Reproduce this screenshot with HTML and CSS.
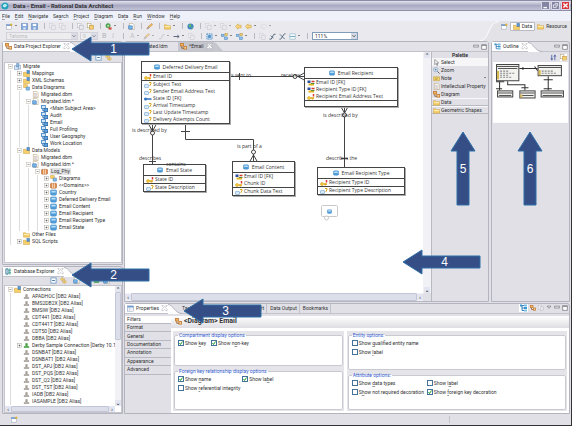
FILE: index.html
```html
<!DOCTYPE html>
<html lang="en">
<head>
    <meta charset="UTF-8">
    <meta name="viewport" content="width=device-width, initial-scale=1.0">
    <title>Data - Email - Rational Data Architect</title>
    <link rel="stylesheet" href="styles.css">
</head>
<body>
    <!-- Icon symbols -->
    <svg class="sprite" aria-hidden="true">
        <symbol id="folder" viewBox="0 0 16 16"><path d="M1 4h5l2 2h7v8H1z" fill="#f6cf6b" stroke="#c8942e"/><path d="M2 8h12" stroke="#fff2bd" stroke-width="2"/></symbol>
        <symbol id="folder-db" viewBox="0 0 16 16"><path d="M1 5h5l2 2h7v8H1z" fill="#f6cf6b" stroke="#c8942e"/><rect x="9" y="1" width="6" height="7" fill="#5b9bd5" stroke="#2c5f96"/></symbol>
        <symbol id="project" viewBox="0 0 16 16"><path d="M1 6h9v9H1z" fill="#d8e8f7" stroke="#4b78ab"/><path d="M6 1h5v8H6z" fill="#8fbbe4" stroke="#3c6ba0"/><path d="M11 5h4v9h-4z" fill="#f0f6fc" stroke="#4b78ab"/></symbol>
        <symbol id="doc" viewBox="0 0 16 16"><path d="M3 1h8l3 3v11H3z" fill="#fdfaf0" stroke="#a08a5c"/><path d="M5 6h6M5 9h6M5 12h6" stroke="#8a7c9c"/></symbol>
        <symbol id="model" viewBox="0 0 16 16"><path d="M3 1h8l3 3v11H3z" fill="#fff" stroke="#a08a5c"/><rect x="1" y="6" width="9" height="8" rx="1" fill="#77b2e8" stroke="#2c6bab"/></symbol>
        <symbol id="subject" viewBox="0 0 16 16"><rect x="1" y="1" width="9" height="7" fill="#d5e9fa" stroke="#4a8ac6" stroke-width="2"/><rect x="7" y="8" width="8" height="7" fill="#5ca0dd" stroke="#3672ad" stroke-width="2"/><path d="M4 9v4h3" fill="none" stroke="#3672ad" stroke-width="2"/></symbol>
        <symbol id="diagram" viewBox="0 0 16 16"><rect x="1" y="1" width="7" height="6" fill="#f4b45a" stroke="#c57f3a" stroke-width="2"/><rect x="9" y="8" width="6" height="6" fill="#f9d08c" stroke="#c57f3a" stroke-width="2"/><path d="M4 8v4h5" fill="none" stroke="#8d5a2a" stroke-width="2"/></symbol>
        <symbol id="diagrams" viewBox="0 0 16 16"><rect x="1" y="1" width="9" height="7" rx="1" fill="#f6cf6b" stroke="#c8942e"/><rect x="7" y="7" width="8" height="7" rx="1" fill="#86b9e6" stroke="#3c78b4"/></symbol>
        <symbol id="entity" viewBox="0 0 16 16"><rect x="1" y="2" width="14" height="12" rx="3" fill="#4f9ddb" stroke="#3f82bd"/><rect x="3" y="4" width="10" height="4" rx="1" fill="#b9def7"/></symbol>
        <symbol id="package" viewBox="0 0 16 16"><rect x="1" y="3" width="14" height="11" rx="2" fill="#dd8a4c" stroke="#a4501e"/><path d="M6 3v11M10 3v11" stroke="#fbe1c5" stroke-width="2"/></symbol>
        <symbol id="key" viewBox="0 0 16 12"><circle cx="4" cy="8" r="3" fill="#f6cf3c" stroke="#c99512"/><path d="M7 8h7M11 8v3" stroke="#e0a818" stroke-width="3"/><path d="M13 0v5" stroke="#dc3b34" stroke-width="3"/></symbol>
        <symbol id="attr" viewBox="0 0 16 12"><rect x="1" y="5" width="8" height="6" rx="1" fill="#d9ebfa" stroke="#5d93c5"/><path d="M10 1h4v3l-2 2v2" fill="none" stroke="#d8a820" stroke-width="2"/></symbol>
        <symbol id="fk" viewBox="0 0 16 12"><circle cx="3" cy="6" r="3" fill="#2d6fc0"/><path d="M5 6h10" stroke="#2d6fc0" stroke-width="3"/></symbol>
        <symbol id="pfk" viewBox="0 0 16 12"><rect x="1" y="1" width="6" height="5" fill="#2a4f9e"/><path d="M3 9h11" stroke="#e3b21c" stroke-width="4"/><path d="M9 3h6" stroke="#d2382f" stroke-width="3"/><path d="M8 7h7" stroke="#4d8f3a" stroke-width="2"/></symbol>
        <symbol id="conn" viewBox="0 0 16 16"><path d="M5 3h6v6h3v4H2V9h3z" fill="#b9b4ae"/><path d="M2 12h12M8 3v6" stroke="#837c76"/></symbol>
        <symbol id="conn-on" viewBox="0 0 16 16"><path d="M5 3h6v6h3v4H2V9h3z" fill="#63b85f"/><path d="M2 12h12M8 3v6" stroke="#32803a"/></symbol>
        <symbol id="db" viewBox="0 0 16 16"><path d="M2 2h5v12H2z" fill="#e4f1f8" stroke="#2f7594" stroke-width="2"/><path d="M11 1v14M8 5h6M8 11h6" stroke="#3b9a8b" stroke-width="2"/></symbol>
        <symbol id="save" viewBox="0 0 16 16"><path d="M1 1h14v14H1z" fill="#7da7dc" stroke="#4a74ad"/><path d="M4 2h8v5H4z" fill="#fff"/><path d="M5 10h6v5H5z" fill="#dce6f2"/></symbol>
        <symbol id="new" viewBox="0 0 16 16"><rect x="1" y="4" width="12" height="10" fill="#fff" stroke="#8a8fa8"/><path d="M1 5h12" stroke="#5a8fd0" stroke-width="3"/><path d="M12 1v6M9 4h6" stroke="#e9b61f" stroke-width="2"/></symbol>
        <symbol id="pages" viewBox="0 0 16 16"><rect x="1" y="1" width="8" height="10" fill="#f3f3f5" stroke="#b2b2ba"/><rect x="6" y="5" width="8" height="10" fill="#e9e9ee" stroke="#a5a5ae"/></symbol>
        <symbol id="pages-on" viewBox="0 0 16 16"><rect x="1" y="1" width="8" height="10" fill="#fff" stroke="#a08d55"/><rect x="6" y="5" width="9" height="9" fill="#f5cf70" stroke="#ad8129"/></symbol>
        <symbol id="run" viewBox="0 0 16 16"><circle cx="7" cy="6" r="5" fill="#50ac4d" stroke="#2f7f33"/><path d="M6 4l4 2-4 3z" fill="#fff"/><rect x="8" y="10" width="7" height="5" fill="#d34a3c"/></symbol>
        <symbol id="pen" viewBox="0 0 16 16"><path d="M2 14l3-6 8-7 2 3-8 7z" fill="#f3bf5a" stroke="#b7762c"/><path d="M2 14l3-6 3 3z" fill="#8a94b8"/></symbol>
        <symbol id="globe" viewBox="0 0 16 16"><circle cx="8" cy="8" r="7" fill="#3f86c9"/><path d="M4 4l5-1 1 4-4 3-2-2zM10 9l4 0-3 4z" fill="#6cbb61"/></symbol>
        <symbol id="back" viewBox="0 0 16 16"><path d="M1 8l6-6v3h7v6H7v3z" fill="#f8d77a" stroke="#c58f23"/></symbol>
        <symbol id="forward" viewBox="0 0 16 16"><path d="M15 8L9 2v3H2v6h7v3z" fill="#f1f1f3" stroke="#c2c2c8"/></symbol>
        <symbol id="link" viewBox="0 0 16 16"><path d="M1 5l4-4v3h5v3H5v2zM15 11l-4-4v3H6v3h5v2z" fill="#f8d77a" stroke="#c58f23"/></symbol>
        <symbol id="collapse" viewBox="0 0 16 16"><rect x="2" y="2" width="12" height="12" fill="#fff" stroke="#6f9cc6" stroke-width="2"/><path d="M5 8h6" stroke="#2f5f94" stroke-width="2"/></symbol>
        <symbol id="select-all" viewBox="0 0 16 16"><rect x="2" y="2" width="12" height="12" fill="#bfdcf2" stroke="#4a87bd" stroke-width="2" stroke-dasharray="3 2"/><rect x="5" y="5" width="6" height="6" fill="#4a87bd"/></symbol>
        <symbol id="arrange" viewBox="0 0 16 16"><rect x="1" y="3" width="6" height="5" fill="#8cbfe8" stroke="#3e7db4"/><rect x="9" y="1" width="6" height="5" fill="#f3d27a" stroke="#a9852c"/><rect x="8" y="9" width="7" height="6" fill="#8cbfe8" stroke="#3e7db4"/></symbol>
        <symbol id="route" viewBox="0 0 16 16"><path d="M1 14h4L11 3h4M4 6l6 6" fill="none" stroke="#4c6176" stroke-width="2"/></symbol>
        <symbol id="cross" viewBox="0 0 16 16"><path d="M1 14h3L12 2h3M2 3l11 11" fill="none" stroke="#4c6176" stroke-width="2"/></symbol>
        <symbol id="compart" viewBox="0 0 16 16"><rect x="2" y="2" width="12" height="12" fill="#eef7fb" stroke="#6fa3b8"/><path d="M2 8h12" stroke="#6fa3b8" stroke-width="2"/></symbol>
        <symbol id="line" viewBox="0 0 16 16"><path d="M2 13h5l4-9h4" fill="none" stroke="#b0b0b8" stroke-width="2"/></symbol>
        <symbol id="arrow-line" viewBox="0 0 16 16"><path d="M1 8h12M10 5l4 3-4 3" fill="none" stroke="#4b5870" stroke-width="2"/></symbol>
        <symbol id="cursor" viewBox="0 0 16 16"><path d="M4 1v12l3-3 2 5 2-1-2-5h4z" fill="#fff" stroke="#333"/></symbol>
        <symbol id="zoom-in" viewBox="0 0 16 16"><circle cx="6" cy="6" r="5" fill="#d4e8f7" stroke="#6c8fb0"/><path d="M10 10l5 5" stroke="#555" stroke-width="2"/><path d="M4 6h4M6 4v4" stroke="#345"/></symbol>
        <symbol id="note" viewBox="0 0 16 16"><path d="M1 4h14v9H1z" fill="#f5d772" stroke="#b58f2a"/><path d="M4 7h8M4 10h6" stroke="#8c6a1a"/></symbol>
        <symbol id="outline" viewBox="0 0 16 16"><path d="M5 3v10M5 3h4M5 8h4M5 13h4" stroke="#3b7fb8" stroke-width="2"/><rect x="1" y="1" width="4" height="4" fill="#3b97d0"/><rect x="9" y="1" width="6" height="4" fill="#7fc0e6"/><rect x="9" y="6" width="6" height="4" fill="#3b97d0"/><rect x="9" y="11" width="6" height="4" fill="#7fc0e6"/></symbol>
        <symbol id="sort" viewBox="0 0 16 16"><path d="M4 2v11M2 10l2 4 2-4M11 14V3M9 6l2-4 2 4" fill="none" stroke="#4b5fa8" stroke-width="2"/></symbol>
        <symbol id="table" viewBox="0 0 16 16"><rect x="1" y="2" width="14" height="12" fill="#fff" stroke="#6b83a8"/><path d="M1 4h14" stroke="#5a8fd0" stroke-width="3"/><path d="M1 9h14M6 5v9" stroke="#a9b9d0"/></symbol>
        <symbol id="close" viewBox="0 0 16 16"><path d="M2 2l4 4-4 4v3h3l3-3 3 3h3v-3l-4-4 4-4V1h-3L8 4 5 1H2z" fill="#fff" stroke="#9a9aa4"/></symbol>
        <symbol id="minus" viewBox="0 0 10 10"><rect x="1" y="1" width="8" height="8" fill="#fff" stroke="#b9b3a8"/><path d="M3 5h4" stroke="#444"/></symbol>
        <symbol id="plus" viewBox="0 0 10 10"><rect x="1" y="1" width="8" height="8" fill="#fff" stroke="#a9a49c"/><path d="M3 5h4M5 3v4" stroke="#333"/></symbol>
        <symbol id="slope" viewBox="0 0 16 10" preserveAspectRatio="none"><path d="M0 0c6 0 8 10 16 10H0z" fill="#fff"/><path d="M0 .5c6 0 8 9 16 9" fill="none" stroke="#b1b1bd"/></symbol>
        <symbol id="min" viewBox="0 0 16 16"><rect x="2" y="3" width="12" height="5" fill="#fff" stroke="#77777f" stroke-width="2"/></symbol>
        <symbol id="max" viewBox="0 0 16 16"><rect x="2" y="2" width="12" height="12" fill="#fff" stroke="#77777f" stroke-width="2"/><path d="M2 4h12" stroke="#77777f" stroke-width="2"/></symbol>
        <symbol id="menu" viewBox="0 0 16 16"><path d="M3 3h10l-5 6z" fill="#fff" stroke="#77777f" stroke-width="2"/></symbol>
        <symbol id="arrow-left" viewBox="0 0 79 26"><path d="M1 13L20 1v6h58v12H20v6z" fill="#354f86" stroke="#2f6ea6"/></symbol>
        <symbol id="arrow-up" viewBox="0 0 26 75"><path d="M13 1L1 20h6v54h12V20h6z" fill="#354f86" stroke="#2f6ea6"/></symbol>
    </svg>

    <header class="titlebar">
        <svg class="logo" viewBox="0 0 16 16"><circle cx="8" cy="8" r="7" fill="#25a3bd"/><path d="M4 9a4 4 0 0 1 8-2l-4 4z" fill="#c4f0f5"/></svg>
        <h1>Data - Email - Rational Data Architect</h1>
        <button class="win" aria-label="Minimize"><svg viewBox="0 0 10 10"><path d="M2 8h5" stroke="#fff" stroke-width="2"/></svg></button>
        <button class="win" aria-label="Restore"><svg viewBox="0 0 10 10"><path d="M4 2h4v4M2 4h4v4H2z" fill="none" stroke="#fff"/></svg></button>
        <button class="win win-close" aria-label="Close"><svg viewBox="0 0 10 10"><path d="M2 2l6 6M8 2l-6 6" stroke="#fff" stroke-width="2"/></svg></button>
    </header>

    <nav class="menubar">
        <button><u>F</u>ile</button>
        <button><u>E</u>dit</button>
        <button><u>N</u>avigate</button>
        <button>Se<u>a</u>rch</button>
        <button><u>P</u>roject</button>
        <button><u>D</u>iagram</button>
        <button>Da<u>t</u>a</button>
        <button><u>R</u>un</button>
        <button><u>W</u>indow</button>
        <button><u>H</u>elp</button>
    </nav>

    <div class="toolbars">
        <div class="tools">
            <div class="toolbar">
                <button class="drop" aria-label="New"><svg><use href="#new"/></svg></button>
                <button aria-label="Save"><svg><use href="#save"/></svg></button>
                <button aria-label="Save all"><svg><use href="#save"/></svg></button>
                <i></i>
                <button aria-label="Cut" disabled><svg><use href="#pages"/></svg></button>
                <button aria-label="Print" disabled><svg><use href="#pages"/></svg></button>
                <i></i>
                <button aria-label="Copy"><svg><use href="#pages"/></svg></button>
                <button aria-label="Paste"><svg><use href="#pages-on"/></svg></button>
                <i></i>
                <button class="drop" aria-label="Run"><svg><use href="#run"/></svg></button>
                <i></i>
                <button aria-label="Script"><svg><use href="#model"/></svg></button>
                <i></i>
                <button aria-label="Annotate"><svg><use href="#pen"/></svg></button>
                <i></i>
                <button class="drop" aria-label="Open"><svg><use href="#folder"/></svg></button>
                <i></i>
                <button aria-label="Browser"><svg><use href="#globe"/></svg></button>
                <i></i>
                <button class="drop" aria-label="Next" disabled><svg><use href="#pages"/></svg></button>
                <button class="drop" aria-label="Previous" disabled><svg><use href="#pages"/></svg></button>
                <button aria-label="Last edit"><svg><use href="#back"/></svg></button>
                <button class="drop" aria-label="Back"><svg><use href="#back"/></svg></button>
                <button class="drop" aria-label="Forward" disabled><svg><use href="#forward"/></svg></button>
            </div>
            <div class="toolbar">
                <select class="combo font-name" aria-label="Font" disabled><option>Tahoma</option></select>
                <select class="combo font-size" aria-label="Size" disabled><option>9</option></select>
                <button class="letter" disabled><b>B</b></button>
                <button class="letter" disabled><em>I</em></button>
                <i></i>
                <button class="drop letter" disabled>A</button>
                <button class="drop" aria-label="Fill" disabled><svg><use href="#pen"/></svg></button>
                <button class="drop" aria-label="Line" disabled><svg><use href="#line"/></svg></button>
                <button class="drop" aria-label="Arrow"><svg><use href="#arrow-line"/></svg></button>
                <button aria-label="Copy format" disabled><svg><use href="#pages"/></svg></button>
                <i></i>
                <button class="drop" aria-label="Select all"><svg><use href="#select-all"/></svg></button>
                <button class="drop" aria-label="Arrange"><svg><use href="#arrange"/></svg></button>
                <button class="drop" aria-label="Align"><svg><use href="#arrange"/></svg></button>
                <i></i>
                <button aria-label="Auto size" disabled><svg><use href="#pages"/></svg></button>
                <button aria-label="Route"><svg><use href="#route"/></svg></button>
                <button aria-label="Cross"><svg><use href="#cross"/></svg></button>
                <button class="drop" aria-label="Compartments"><svg><use href="#compart"/></svg></button>
                <i></i>
                <select class="combo zoom" aria-label="Zoom"><option>111%</option></select>
            </div>
        </div>
        <div class="perspectives">
            <svg class="perspective-curve" viewBox="0 0 20 20" preserveAspectRatio="none"><path d="M0 20C10 20 8 0 20 0v20z" fill="#e2e2e7"/><path d="M0 20C10 20 8 .5 20 .5" fill="none" stroke="#fff"/></svg>
            <button aria-label="Open perspective"><svg><use href="#new"/></svg></button>
            <button class="on"><svg><use href="#folder-db"/></svg>Data</button>
            <button><svg><use href="#folder"/></svg>Resource</button>
        </div>
    </div>

    <main class="workbench">
        <div class="side">
            <section class="view explorer">
                <div class="tabs">
                    <div class="tab"><svg><use href="#diagram"/></svg>Data Project Explorer<svg><use href="#close"/></svg></div><svg class="slope"><use href="#slope"/></svg>
                </div>
                <div class="view-tools">
                    <button aria-label="Collapse all"><svg><use href="#collapse"/></svg></button>
                    <button aria-label="Link with editor"><svg><use href="#link"/></svg></button>
                </div>
                <div class="pane">
                    <ul class="tree">
                        <li><div><svg class="ex"><use href="#minus"/></svg><svg><use href="#project"/></svg>Migrate</div>
                            <ul>
                                <li><div><svg class="ex"><use href="#plus"/></svg><svg><use href="#folder-db"/></svg>Mappings</div></li>
                                <li><div><svg class="ex"><use href="#plus"/></svg><svg><use href="#folder-db"/></svg>XML Schemas</div></li>
                                <li><div><svg class="ex"><use href="#minus"/></svg><svg><use href="#diagrams"/></svg>Data Diagrams</div>
                                    <ul>
                                        <li><div><s></s><svg><use href="#doc"/></svg>Migrated.dbm</div></li>
                                        <li><div><svg class="ex"><use href="#minus"/></svg><svg><use href="#model"/></svg>Migrated.ldm *</div>
                                            <ul>
                                                <li><div><s></s><svg><use href="#subject"/></svg>&lt;Main Subject Area&gt;</div></li>
                                                <li><div><s></s><svg><use href="#subject"/></svg>Audit</div></li>
                                                <li><div><s></s><svg><use href="#subject"/></svg>Email</div></li>
                                                <li><div><s></s><svg><use href="#subject"/></svg>Full Profiling</div></li>
                                                <li><div><s></s><svg><use href="#subject"/></svg>User Geography</div></li>
                                                <li><div><s></s><svg><use href="#subject"/></svg>Work Location</div></li>
                                            </ul>
                                        </li>
                                    </ul>
                                </li>
                                <li><div><svg class="ex"><use href="#minus"/></svg><svg><use href="#folder-db"/></svg>Data Models</div>
                                    <ul>
                                        <li><div><s></s><svg><use href="#doc"/></svg>Migrated.dbm</div></li>
                                        <li><div><svg class="ex"><use href="#minus"/></svg><svg><use href="#model"/></svg>Migrated.ldm *</div>
                                            <ul>
                                                <li><div><svg class="ex"><use href="#minus"/></svg><svg><use href="#package"/></svg><span class="picked">Log_Phy</span></div>
                                                    <ul>
                                                        <li><div><svg class="ex"><use href="#plus"/></svg><svg><use href="#diagrams"/></svg>Diagrams</div></li>
                                                        <li><div><svg class="ex"><use href="#plus"/></svg><svg><use href="#package"/></svg>&lt;&lt;Domains&gt;&gt;</div></li>
                                                        <li><div><svg class="ex"><use href="#plus"/></svg><svg><use href="#entity"/></svg>Country</div></li>
                                                        <li><div><svg class="ex"><use href="#plus"/></svg><svg><use href="#entity"/></svg>Deferred Delivery Email</div></li>
                                                        <li><div><svg class="ex"><use href="#plus"/></svg><svg><use href="#entity"/></svg>Email Content</div></li>
                                                        <li><div><svg class="ex"><use href="#plus"/></svg><svg><use href="#entity"/></svg>Email Recipient</div></li>
                                                        <li><div><svg class="ex"><use href="#plus"/></svg><svg><use href="#entity"/></svg>Email Recipient Type</div></li>
                                                        <li><div><svg class="ex"><use href="#plus"/></svg><svg><use href="#entity"/></svg>Email State</div></li>
                                                    </ul>
                                                </li>
                                            </ul>
                                        </li>
                                    </ul>
                                </li>
                                <li><div><s></s><svg><use href="#folder"/></svg>Other Files</div></li>
                                <li><div><svg class="ex"><use href="#plus"/></svg><svg><use href="#folder-db"/></svg>SQL Scripts</div></li>
                            </ul>
                        </li>
                    </ul>
                </div>
            </section>

            <section class="view database">
                <div class="tabs">
                    <div class="tab"><svg><use href="#db"/></svg>Database Explorer<svg><use href="#close"/></svg></div><svg class="slope"><use href="#slope"/></svg>
                </div>
                <div class="view-tools">
                    <button aria-label="Collapse all"><svg><use href="#collapse"/></svg></button>
                    <button aria-label="Link with editor"><svg><use href="#link"/></svg></button>
                    <i></i>
                    <button aria-label="New connection"><svg><use href="#model"/></svg></button>
                    <button aria-label="Filter"><svg><use href="#conn"/></svg></button>
                    <button aria-label="Reconnect"><svg><use href="#conn-on"/></svg></button>
                    <button aria-label="Save script"><svg><use href="#model"/></svg></button>
                    <button aria-label="View menu"><svg><use href="#menu"/></svg></button>
                </div>
                <div class="pane scrolled">
                    <ul class="tree">
                        <li><div><svg class="ex"><use href="#minus"/></svg><svg><use href="#folder-db"/></svg>Connections</div>
                            <ul>
                                <li><div><s></s><svg><use href="#conn"/></svg>APADHOC [DB2 Alias]</div></li>
                                <li><div><s></s><svg><use href="#conn"/></svg>BMS2DB2X [DB2 Alias]</div></li>
                                <li><div><s></s><svg><use href="#conn"/></svg>BMSIW [DB2 Alias]</div></li>
                                <li><div><s></s><svg><use href="#conn"/></svg>CDT441 [DB2 Alias]</div></li>
                                <li><div><s></s><svg><use href="#conn"/></svg>CDT441T [DB2 Alias]</div></li>
                                <li><div><s></s><svg><use href="#conn"/></svg>CDT50 [DB2 Alias]</div></li>
                                <li><div><s></s><svg><use href="#conn"/></svg>DBBA [DB2 Alias]</div></li>
                                <li><div><svg class="ex"><use href="#plus"/></svg><svg><use href="#conn-on"/></svg>Derby Sample Connection [Derby 10.1</div></li>
                                <li><div><s></s><svg><use href="#conn"/></svg>DSNBAT [DB2 Alias]</div></li>
                                <li><div><s></s><svg><use href="#conn"/></svg>DSNBAT1 [DB2 Alias]</div></li>
                                <li><div><s></s><svg><use href="#conn"/></svg>DST_APJ [DB2 Alias]</div></li>
                                <li><div><s></s><svg><use href="#conn"/></svg>DST_PQS [DB2 Alias]</div></li>
                                <li><div><s></s><svg><use href="#conn"/></svg>DST_Q2 [DB2 Alias]</div></li>
                                <li><div><s></s><svg><use href="#conn"/></svg>DST_TST [DB2 Alias]</div></li>
                                <li><div><s></s><svg><use href="#conn"/></svg>IADB [DB2 Alias]</div></li>
                                <li><div><s></s><svg><use href="#conn"/></svg>IASAMPLE [DB2 Alias]</div></li>
                            </ul>
                        </li>
                    </ul>
                    <div class="vbar"><b>⌃</b><span class="thumb"></span><b>⌄</b></div>
                    <div class="hbar"><b>‹</b><span class="thumb"></span><b>›</b></div>
                </div>
            </section>
        </div>

        <div class="center">
            <div class="upper">
                <section class="view editor">
                    <div class="tabs editor-tabs">
                        <div class="tab off"><svg><use href="#model"/></svg>*Migrated.ldm</div>
                        <div class="tab current"><svg><use href="#diagram"/></svg>*Email<svg><use href="#close"/></svg></div><svg class="slope" viewBox="0 0 16 10" preserveAspectRatio="none"><path d="M0 0c6 0 8 10 16 10H0z" fill="#c6c6ce"/></svg>
                        <div class="tab-tools"><svg><use href="#min"/></svg><svg><use href="#max"/></svg></div>
                    </div>
                    <div class="editor-body">
                        <div class="drawing">
                            <div class="canvas">
                                <svg class="lines" width="300" height="240" fill="none" stroke="#444">
                                    <!-- Deferred Delivery Email to Email Recipient -->
                                    <path d="M105 24.5h75M114.5 21v7M180 20.5l-7 4 7 4"/>
                                    <circle cx="170" cy="24.5" r="2" fill="#fff"/>
                                    <!-- Deferred Delivery Email to Email State -->
                                    <path d="M27.5 72v40M23.5 72l4 7 4-7M24 109.5h7"/>
                                    <circle cx="27.5" cy="81" r="2" fill="#fff"/>
                                    <!-- Deferred Delivery Email to Email Content -->
                                    <path d="M60.5 72v15.5h68V110M56 79.5h9M124.5 110l4-7 4 7"/>
                                    <circle cx="128.5" cy="100" r="2" fill="#fff"/>
                                    <!-- Email Recipient to Email Recipient Type -->
                                    <path d="M219.5 54v62M215.5 54l4 7 4-7M216 106.5h7"/>
                                    <circle cx="219.5" cy="63" r="2" fill="#fff"/>
                                </svg>
                                <span class="label sent">is sent to</span>
                                <span class="label receives">receives</span>
                                <span class="label described">is described by</span>
                                <span class="label describes">describes</span>
                                <span class="label part">is part of a</span>
                                <span class="label described-by">is described by</span>
                                <span class="label describes-the">describes the</span>

                                <div class="node delivery">
                                    <h2><svg><use href="#entity"/></svg>Deferred Delivery Email</h2>
                                    <ul><li><svg><use href="#key"/></svg>Email ID</li></ul>
                                    <ul>
                                        <li><svg><use href="#attr"/></svg>Subject Text</li>
                                        <li><svg><use href="#attr"/></svg>Sender Email Address Text</li>
                                        <li><svg><use href="#fk"/></svg>State ID [FK]</li>
                                        <li><svg><use href="#attr"/></svg>Arrival Timestamp</li>
                                        <li><svg><use href="#attr"/></svg>Last Update Timestamp</li>
                                        <li><svg><use href="#attr"/></svg>Delivery Attempts Count</li>
                                    </ul>
                                </div>
                                <div class="node recipient">
                                    <h2><svg><use href="#entity"/></svg>Email Recipient</h2>
                                    <ul>
                                        <li><svg><use href="#pfk"/></svg>Email ID [FK]</li>
                                        <li><svg><use href="#pfk"/></svg>Recipient Type ID [FK]</li>
                                        <li><svg><use href="#key"/></svg>Recipient Email Address Text</li>
                                    </ul>
                                    <ul class="empty"></ul>
                                </div>
                                <div class="node state">
                                    <h2><svg><use href="#entity"/></svg>Email State</h2>
                                    <ul><li><svg><use href="#key"/></svg>State ID</li></ul>
                                    <ul><li><svg><use href="#attr"/></svg>State Description</li></ul>
                                </div>
                                <div class="node content">
                                    <h2><svg><use href="#entity"/></svg>Email Content</h2>
                                    <ul>
                                        <li><svg><use href="#pfk"/></svg>Email ID [FK]</li>
                                        <li><svg><use href="#key"/></svg>Chunk ID</li>
                                    </ul>
                                    <ul><li><svg><use href="#attr"/></svg>Chunk Data Text</li></ul>
                                </div>
                                <div class="node type">
                                    <h2><svg><use href="#entity"/></svg>Email Recipient Type</h2>
                                    <ul><li><svg><use href="#key"/></svg>Recipient Type ID</li></ul>
                                    <ul><li><svg><use href="#attr"/></svg>Recipient Type Description</li></ul>
                                </div>
                                <span class="label contains">contains</span>
                                <svg class="balloon" viewBox="0 0 18 16"><rect x=".5" y=".5" width="16" height="11" rx="1" fill="#fff" stroke="#c9c9c9"/><circle cx="5.500" cy="13" r="2" fill="#fff" stroke="#c9c9c9"/><use href="#entity" x="6" y="4" width="5" height="5"/></svg>
                            </div>
                            <div class="vbar"><b>⌃</b><span></span><b>⌄</b></div>
                            <div class="hbar"><b>‹</b><span class="thumb"></span><b>›</b></div>
                        </div>
                        <aside class="palette">
                            <h2>Palette</h2>
                            <button class="picked"><svg><use href="#cursor"/></svg>Select</button>
                            <button><svg><use href="#zoom-in"/></svg>Zoom</button>
                            <button class="more"><svg><use href="#note"/></svg>Note</button>
                            <button><svg><use href="#doc"/></svg>Intellectual Property</button>
                            <button><svg><use href="#diagram"/></svg>Diagram</button>
                            <button class="drawer"><svg><use href="#folder"/></svg>Data</button>
                            <button class="drawer"><svg><use href="#folder"/></svg>Geometric Shapes</button>
                        </aside>
                    </div>
                </section>

                <section class="view outline">
                    <div class="tabs">
                        <div class="tab"><svg><use href="#outline"/></svg>Outline<svg><use href="#close"/></svg></div><svg class="slope"><use href="#slope"/></svg>
                        <div class="tab-tools"><svg><use href="#min"/></svg><svg><use href="#max"/></svg></div>
                    </div>
                    <div class="view-tools">
                        <button aria-label="Sort"><svg><use href="#sort"/></svg></button>
                        <button class="on" aria-label="Overview"><svg><use href="#pages-on"/></svg></button>
                    </div>
                    <svg class="overview" viewBox="0 0 74 60">
                        <rect width="74" height="60" fill="#fff"/>
                        <g fill="#f3f3f0" stroke="#444">
                            <rect x="3.500" y="2.500" width="22" height="16"/>
                            <rect x="44.500" y="3.500" width="23" height="10"/>
                            <rect x="4.500" y="28.500" width="15" height="6"/>
                            <rect x="26.500" y="28.500" width="15" height="7"/>
                            <rect x="47.500" y="28.500" width="22" height="6"/>
                        </g>
                        <path d="M4 4.500h21M5 6.500h19M45 5.500h22M5 30.500h14M27 30.500h14M48 30.500h21M6 33h12M28 33h12M49 33h19" stroke="#555"/>
                        <path d="M7 9h9M7 11h15M7 13h9M7 15h12M48 9h11M48 11h15" stroke="#888" stroke-dasharray="2 1"/>
                        <path d="M5 9v8M46 8v5M28 32v3" stroke="#d9b84d" stroke-width="2"/>
                        <path d="M26 6.500h18M29.500 5v3M41 4.500l3 4M6.500 19v9M3 19.500h8M3 26.500h6M14.500 19v3.500h17V28M28 25.500h7M54.500 14v14M50 17.500h9M50 26.500h8" fill="none" stroke="#333"/>
                    </svg>
                </section>
            </div>

            <section class="view properties">
                <div class="tabs">
                    <div class="tab"><svg><use href="#table"/></svg>Properties<svg><use href="#close"/></svg></div><svg class="slope"><use href="#slope"/></svg>
                    <div class="other-tabs">
                        <button>Tasks</button>
                        <button class="report">Model Report</button>
                        <button>Data Output</button>
                        <button>Bookmarks</button>
                    </div>
                    <div class="tab-tools"><svg class="on"><use href="#outline"/></svg><svg><use href="#diagram"/></svg><svg><use href="#pages"/></svg><svg><use href="#menu"/></svg><svg><use href="#min"/></svg><svg><use href="#max"/></svg></div>
                </div>
                <div class="property-body">
                    <nav class="pages">
                        <button class="on">Filters</button>
                        <button>Format</button>
                        <button>General</button>
                        <button>Documentation</button>
                        <button>Annotation</button>
                        <button>Appearance</button>
                        <button>Advanced</button>
                    </nav>
                    <div class="sheet">
                        <h2><svg><use href="#diagram"/></svg>&lt;Diagram&gt; Email</h2>
                        <form class="options">
                            <div class="column">
                                <fieldset>
                                    <legend>Compartment display options</legend>
                                    <div class="checks inline">
                                        <label><input type="checkbox" checked><span>Show <u>k</u>ey</span></label>
                                        <label><input type="checkbox" checked><span>Show n<u>o</u>n-key</span></label>
                                    </div>
                                </fieldset>
                                <fieldset class="tall">
                                    <legend>Foreign key relationship display options</legend>
                                    <div class="checks">
                                        <label><input type="checkbox" checked><span>Show <u>n</u>ame</span></label>
                                        <label><input type="checkbox" checked><span>Show la<u>b</u>el</span></label>
                                        <label><input type="checkbox"><span>Show <u>r</u>eferential integrity</span></label>
                                    </div>
                                </fieldset>
                            </div>
                            <div class="column wide">
                                <fieldset>
                                    <legend>Entity options:</legend>
                                    <div class="checks stacked">
                                        <label><input type="checkbox"><span>Show <u>q</u>ualified entity name</span></label>
                                        <label><input type="checkbox"><span>Show <u>l</u>abel</span></label>
                                    </div>
                                </fieldset>
                                <fieldset>
                                    <legend>Attribute options:</legend>
                                    <div class="checks">
                                        <label><input type="checkbox"><span>Show <u>d</u>ata types</span></label>
                                        <label><input type="checkbox"><span>Show l<u>a</u>bel</span></label>
                                        <label><input type="checkbox"><span>S<u>h</u>ow not required decoration</span></label>
                                        <label><input type="checkbox" checked><span>Show <u>f</u>oreign key decoration</span></label>
                                    </div>
                                </fieldset>
                            </div>
                        </form>
                    </div>
                </div>
            </section>
        </div>
    </main>

    <footer class="statusbar"><svg><use href="#new"/></svg><i></i></footer>

    <!-- Numbered callouts -->
    <div class="callout left c1"><svg><use href="#arrow-left"/></svg><span>1</span></div>
    <div class="callout left c2"><svg><use href="#arrow-left"/></svg><span>2</span></div>
    <div class="callout left c3"><svg><use href="#arrow-left"/></svg><span>3</span></div>
    <div class="callout left c4"><svg><use href="#arrow-left"/></svg><span>4</span></div>
    <div class="callout up c5"><svg><use href="#arrow-up"/></svg><span>5</span></div>
    <div class="callout up c6"><svg><use href="#arrow-up"/></svg><span>6</span></div>
</body>
</html>
```

FILE: styles.css
```css
* {
    box-sizing: border-box;
}

body {
    position: relative;
    display: flex;
    flex-direction: column;
    height: 100vh;
    margin: 0;
    overflow: hidden;
    border-right: 1px solid #333;
    border-bottom: 1px solid #333;
    background: #e0e0e6;
    color: #333;
    font: 5px/7px Roboto, "Liberation Sans", sans-serif;
    white-space: nowrap;
}

h1, h2, ul, fieldset, legend {
    margin: 0;
    padding: 0;
    font-size: inherit;
    list-style: none;
}

button, select, input {
    margin: 0;
    padding: 0;
    border: 0;
    background: none;
    color: inherit;
    font: inherit;
}

svg {
    flex: none;
    width: 7px;
    height: 7px;
}

.sprite {
    position: absolute;
    width: 0;
    height: 0;
}

/* Title and menu */
.titlebar {
    display: flex;
    align-items: center;
    gap: 1px;
    height: 11px;
    padding: 0 1px;
    border-top: 1px solid #8c8ca6;
    border-bottom: 1px solid #8f8fa8;
    background: linear-gradient(#e3e3ee, #a9a9c3 50%, #c3c3d6);
}

.titlebar h1 {
    flex: 1;
    padding-left: 3px;
    font-size: 6px;
}

.logo {
    width: 8px;
    height: 8px;
}

.win {
    display: flex;
    width: 9px;
    height: 9px;
    border: 1px solid #dcdcea;
    border-radius: 1px;
    background: #8484a3;
}

.win-close {
    background: #d8383c;
}

.menubar {
    display: flex;
    gap: 5px;
    height: 10px;
    padding: 0 2px;
    background: #eef1f9;
}

u {
    text-decoration-color: #999;
    text-decoration-thickness: 1px;
}

/* Toolbars */
.toolbars {
    display: flex;
    justify-content: space-between;
    height: 20px;
    background: #e9e9ee;
}

.tools {
    padding-left: 6px;
}

.toolbar {
    display: flex;
    align-items: center;
    gap: 2px;
    height: 10px;
}

.toolbar button {
    display: flex;
    align-items: center;
    width: 8px;
}

.toolbar button:disabled {
    color: #aaa;
    opacity: 0.6;
}

.toolbar .drop {
    width: 13px;
}

.drop::after {
    margin-left: 2px;
    border: 1px solid transparent;
    border-top-color: #222;
    content: "";
}

.toolbar i {
    width: 6px;
    height: 6px;
    background: linear-gradient(#b9b9c2, #b9b9c2) center / 1px 100% no-repeat;
}

.letter {
    padding-left: 2px;
    font-size: 7px;
}

.combo {
    width: 18px;
    height: 8px;
    padding-left: 2px;
    border: 1px solid #c9c9d0;
    border-radius: 0;
    background: url("data:image/svg+xml,%3Csvg xmlns='http://www.w3.org/2000/svg' viewBox='0 0 8 8'%3E%3Cpath d='M0 0h8v8H0z' fill='%23d4d9e6'/%3E%3Cpath d='M2 3l2 2 2-2' fill='none' stroke='%23333'/%3E%3C/svg%3E") right / 6px 6px no-repeat #fff;
    line-height: 6px;
    appearance: none;
}

.combo:disabled {
    background-color: #efeff2;
    color: #aaa;
    opacity: 0.7;
}

.font-name {
    width: 72px;
}

.zoom {
    width: 46px;
    border-color: #7f9db9;
}

.perspectives {
    display: flex;
    align-items: center;
    height: 20px;
    padding: 0 2px 9px 0;
    background: #e2e2e7;
}

.perspectives button {
    display: flex;
    align-items: center;
    gap: 2px;
    height: 9px;
    padding: 0 2px;
}

.perspectives .on {
    border: 1px solid #b9b9c4;
    border-radius: 1px;
    background: #fff;
}

.perspectives .perspective-curve {
    align-self: flex-start;
    width: 19px;
    height: 20px;
    background: #e9e9ee;
}

/* Workbench */
.workbench {
    display: flex;
    flex: 1;
    gap: 1px;
    min-height: 0;
    padding: 0 1px 0 2px;
}

.side, .center {
    display: flex;
    flex-direction: column;
    gap: 1px;
    min-width: 0;
}

.side {
    flex: 0 0 121px;
}

.center {
    flex: 1;
}

.view {
    display: flex;
    flex-direction: column;
    min-height: 0;
    min-width: 0;
    border: 1px solid #b4b4bf;
    border-radius: 3px 3px 0 0;
}

.explorer {
    flex: 225;
}

.database {
    flex: 148;
}

.tabs {
    display: flex;
    flex: none;
    height: 10px;
    border-bottom: 1px solid #c2c2cb;
}

.tab {
    display: flex;
    align-items: center;
    gap: 2px;
    padding-left: 2px;
    background: #fff;
}

.slope {
    width: 14px;
    height: 10px;
}

.tab-tools {
    display: flex;
    align-items: center;
    gap: 2px;
    margin-left: auto;
    padding-right: 1px;
}

.tab-tools svg {
    width: 6px;
    height: 6px;
}

.tab-tools .on {
    width: 9px;
    height: 8px;
    background: #fff;
}

.view-tools {
    display: flex;
    flex: none;
    align-items: center;
    justify-content: flex-end;
    gap: 3px;
    height: 10px;
    padding-right: 2px;
}

.view-tools button {
    display: flex;
}

.view-tools .on {
    background: #fff;
}

.explorer .view-tools {
    padding-right: 10px;
}

.database .view-tools {
    height: 8px;
}

.pane {
    flex: 1;
    min-height: 0;
    margin: 0 0 1px 1px;
    overflow: hidden;
    border: 1px solid #c5c5ce;
    background: #fff;
}

.scrolled {
    display: grid;
    grid-template: minmax(0, 1fr) 6px / minmax(0, 1fr) 6px;
    margin-bottom: 0;
}

/* Trees */
.tree {
    overflow: hidden;
    padding: 0 0 0 3px;
}

.tree ul {
    padding-left: 9px;
    background: linear-gradient(#dcdcdc, #dcdcdc) 2px 0 / 1px 100% no-repeat;
}

.tree div {
    display: flex;
    align-items: center;
    gap: 1px;
    height: 7px;
}

.tree div svg:last-of-type {
    margin-right: 1px;
}

.tree .ex, .tree s {
    flex: none;
    width: 5px;
    height: 5px;
}

.tree .picked {
    padding: 0 1px;
    background: #e3e3e6;
}

/* Scroll bars */
.vbar, .hbar {
    display: flex;
    background: #f2f2f6;
    color: #333;
    line-height: 6px;
    text-align: center;
}

.vbar {
    flex-direction: column;
}

.hbar {
    grid-column: 1;
}

.vbar b, .hbar b {
    flex: none;
    width: 6px;
    height: 6px;
    background: #e3e6f0;
}

.vbar span, .hbar span {
    flex: 1;
}

.vbar .thumb {
    flex: 0 0 40%;
    margin-bottom: auto;
}

.thumb {
    align-self: stretch;
    border: 1px solid #c3c6d6;
    border-radius: 1px;
    background: #dcdfea;
}

/* Editor */
.upper {
    display: flex;
    flex: 262;
    gap: 2px;
    min-height: 0;
}

.editor {
    flex: 1;
}

.editor-tabs {
    background: #e2e2e8;
}

.editor-tabs .off {
    width: 53px;
    background: none;
}

.editor-tabs .current {
    background: #c6c6ce;
}

.editor-body {
    display: flex;
    flex: 1;
    min-height: 0;
}

.drawing {
    display: grid;
    flex: 1;
    grid-template: minmax(0, 1fr) 8px / minmax(0, 1fr) 8px;
}

.drawing .vbar, .drawing .hbar {
    align-items: center;
}

.canvas {
    position: relative;
    overflow: hidden;
    background: #fff;
    font-family: "Open Sans", "Noto Sans", sans-serif;
}

.lines, .label, .node, .balloon {
    position: absolute;
}

.lines {
    top: 0;
    left: 0;
    width: 300px;
    height: 240px;
}

.node {
    border: 1px solid #444;
    background: #fff;
    box-shadow: 1px 1px #aaa;
}

.node h2 {
    display: flex;
    align-items: center;
    justify-content: center;
    gap: 3px;
    height: 10px;
    font-weight: normal;
}

.node h2 svg {
    width: 6px;
    height: 6px;
}

.node ul {
    border-top: 1px solid #444;
}

.node li {
    display: flex;
    align-items: center;
    gap: 1px;
    height: 7px;
    padding-left: 2px;
}

.node li svg {
    width: 8px;
    height: 6px;
}

.node .empty {
    height: 6px;
}

.delivery { left: 16px; top: 9px; width: 89px; }
.recipient { left: 179px; top: 15px; width: 94px; }
.state { left: 18px; top: 112px; width: 63px; }
.content { left: 107px; top: 109px; width: 63px; }
.type { left: 192px; top: 115px; width: 88px; }
.balloon { left: 196px; top: 153px; width: 18px; height: 16px; }

.sent { left: 105px; top: 20px; }
.receives { left: 156px; top: 20px; }
.described { left: 7px; top: 75px; }
.describes { left: 14px; top: 103px; }
.part { left: 112px; top: 91px; }
.described-by { left: 198px; top: 60px; }
.describes-the { left: 201px; top: 103px; }
.contains { left: 41px; top: 109px; }

/* Palette */
.palette {
    display: flex;
    flex: 0 0 57px;
    flex-direction: column;
    border-left: 1px solid #b9b9c2;
}

.palette h2 {
    height: 6px;
    text-align: center;
    line-height: 6px;
}

.palette button {
    display: flex;
    align-items: center;
    gap: 1px;
    height: 8px;
    padding-left: 1px;
}

.palette .picked {
    background: #f6f6f8;
}

.palette .more::after {
    margin: 0 2px 0 auto;
    border: 1px solid transparent;
    border-top-color: #222;
    content: "";
}

.palette .drawer {
    border-top: 1px solid #f8f8fa;
    border-bottom: 1px solid #b9b9c2;
}

.outline {
    flex: 0 0 79px;
}

.overview {
    width: auto;
    height: auto;
    margin: 0 1px;
}

/* Properties */
.properties {
    flex: 110;
}

.other-tabs {
    display: flex;
    gap: 3px;
}

.other-tabs button {
    padding-right: 2px;
    border-right: 1px solid #c2c2cb;
}

.other-tabs .report {
    padding-left: 33px;
}

.property-body {
    display: flex;
    flex: 1;
    min-height: 0;
    margin-top: 2px;
}

.pages {
    display: flex;
    flex: 0 0 46px;
    flex-direction: column;
    height: 59px;
}

.pages button {
    flex: 1;
    padding-left: 2px;
    border-bottom: 1px solid #b9b9c4;
    text-align: left;
    line-height: 7px;
}

.pages .on {
    background: #fff;
}

.sheet {
    display: flex;
    flex: 1;
    flex-direction: column;
    background: #fff;
}

.sheet h2 {
    display: flex;
    align-items: center;
    gap: 2px;
    height: 12px;
    padding-left: 4px;
    background: linear-gradient(#fff, #dedee3);
    font-size: 7px;
}

.options {
    display: flex;
    flex: 1;
    gap: 3px;
    padding: 3px 2px 2px;
}

.column {
    display: flex;
    flex: 170;
    flex-direction: column;
    gap: 2px;
    padding: 1px;
    background: #e4e4e9;
}

.wide {
    flex: 220;
}

fieldset {
    flex: 4;
    min-width: 0;
    border: 1px solid #c9c9d2;
    border-radius: 2px;
    background: #fff;
}

.tall {
    flex: 5;
}

legend {
    margin-left: 3px;
    padding: 0 1px;
    color: #3560d0;
}

.checks {
    display: grid;
    grid-template-columns: 2fr 3fr;
    gap: 2px 0;
    padding: 1px 3px;
}

.wide .checks {
    grid-template-columns: 75px 1fr;
}

.checks.inline {
    display: flex;
    gap: 5px;
}

.wide .checks.stacked {
    grid-template-columns: 1fr;
}

.checks label {
    display: flex;
    align-items: center;
    gap: 1px;
}

.checks input {
    flex: none;
    width: 6px;
    height: 6px;
    border: 1px solid #44729b;
    background: #fff;
    appearance: none;
}

.checks input:checked {
    background: url("data:image/svg+xml,%3Csvg xmlns='http://www.w3.org/2000/svg' viewBox='0 0 8 8'%3E%3Cpath d='M1 4l2 3 4-6' fill='none' stroke='%2321a121' stroke-width='2'/%3E%3C/svg%3E") center / 4px 4px no-repeat #fff;
}

/* Status bar */
.statusbar {
    display: flex;
    align-items: center;
    height: 11px;
    padding-left: 11px;
}

.statusbar i {
    width: 1px;
    height: 7px;
    margin-left: 77%;
    background: #c2c2cb;
}

/* Callouts */
.callout {
    position: absolute;
    display: grid;
    place-items: center;
    color: #fff;
    font: 12px/12px "Liberation Sans", Arial, sans-serif;
}

.callout svg, .callout span {
    grid-area: 1 / 1;
}

.left svg {
    width: 79px;
    height: 26px;
}

.left span {
    padding-left: 6px;
}

.up svg {
    width: 26px;
    height: 75px;
}

.c1 { left: 71px; top: 36px; }
.c2 { left: 71px; top: 262px; }
.c3 { left: 183px; top: 298px; }
.c4 { right: 90px; top: 249px; }
.c5 { right: 95px; top: 131px; }
.c6 { right: 28px; top: 131px; }
```
